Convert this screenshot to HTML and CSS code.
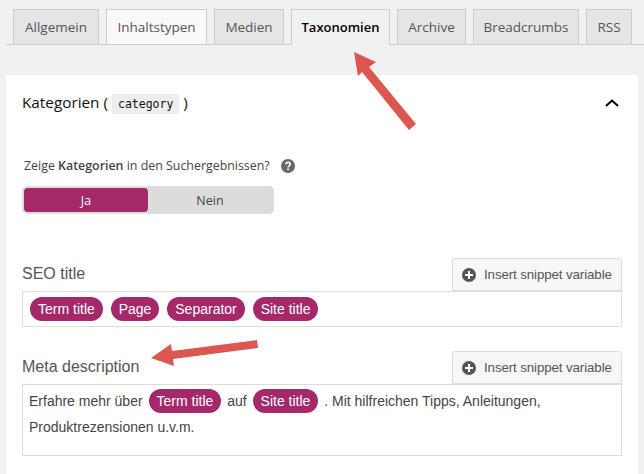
FILE: index.html
```html
<!DOCTYPE html>
<html lang="de">
<head>
<meta charset="utf-8">
<title>Taxonomien</title>
<link rel="stylesheet" href="styles.css">
</head>
<body>
<nav class="tabs">
  <a class="tab">Allgemein</a>
  <a class="tab tab-light">Inhaltstypen</a>
  <a class="tab">Medien</a>
  <a class="tab tab-active">Taxonomien</a>
  <a class="tab">Archive</a>
  <a class="tab">Breadcrumbs</a>
  <a class="tab">RSS</a>
</nav>
<main class="card">
  <header class="card-head">
    <h2 class="card-title">Kategorien ( <code class="code">category</code> )</h2>
    <svg class="chevron" width="14" height="10" viewBox="0 0 14 10"><path d="M1 8 7 2.500 13 8" fill="none" stroke="#000" stroke-width="2"/></svg>
  </header>
  <div class="question">
    <span>Zeige <b>Kategorien</b> in den Suchergebnissen?</span>
    <svg class="help" width="14" height="14" viewBox="0 0 14 14"><circle cx="7" cy="7" r="7" fill="#646970"/><path d="M4.900 5.400C5 4.100 5.900 3.400 7.100 3.400c1.300 0 2.100.8 2.100 1.800 0 1.700-2.100 1.600-2.100 3.300" fill="none" stroke="#fff" stroke-width="1.600"/><rect x="6.200" y="9.500" width="1.800" height="1.700" fill="#fff"/></svg>
  </div>
  <div class="toggle">
    <span class="toggle-opt toggle-on">Ja</span>
    <span class="toggle-opt">Nein</span>
  </div>
  <section class="field field-title">
    <div class="field-head">
      <label class="field-label">SEO title</label>
      <button class="snippet"><svg width="14" height="14" viewBox="0 0 14 14"><circle cx="7" cy="7" r="7" fill="#555"/><path d="M7 3v8M3 7h8" stroke="#fff" stroke-width="2"/></svg>Insert snippet variable</button>
    </div>
    <div class="editor editor-title"><span class="pill">Term title</span> <span class="pill">Page</span> <span class="pill">Separator</span> <span class="pill">Site title</span></div>
  </section>
  <section class="field field-meta">
    <div class="field-head">
      <label class="field-label">Meta description</label>
      <button class="snippet"><svg width="14" height="14" viewBox="0 0 14 14"><circle cx="7" cy="7" r="7" fill="#555"/><path d="M7 3v8M3 7h8" stroke="#fff" stroke-width="2"/></svg>Insert snippet variable</button>
    </div>
    <div class="editor editor-meta">Erfahre mehr über <span class="pill">Term title</span> auf <span class="pill">Site title</span> . Mit hilfreichen Tipps, Anleitungen, Produktrezensionen u.v.m.</div>
  </section>
</main>
<svg class="arrows" width="644" height="474" viewBox="0 0 644 474">
  <path d="M354 52 376 62 369 67 416 124 409 130 362 72 358 76Z" fill="#dc5750"/>
  <path d="M151 358 171 344 172 351 257 340 258 348 173 359 174 366Z" fill="#dc5750"/>
</svg>
</body>
</html>
```
FILE: styles.css
```css
* { box-sizing: border-box; }
html, body { height: 100%; }
body {
  margin: 0;
  background: #f1f1f1;
  font-family: "Liberation Sans", Arial, sans-serif;
  color: #444;
  overflow: hidden;
  position: relative;
}
.tabs {
  display: grid;
  grid-template-columns: 86px 101px 70px 99px 69px 106px 46px;
  gap: 7px;
  height: 45px;
  margin-left: 6px;
  padding: 9px 0 0 7px;
  border-bottom: 1px solid #ccc;
}
.tab {
  height: 35px;
  border: 1px solid #ccc;
  border-bottom: 0;
  background: #e5e5e5;
  color: #555;
  text-align: center;
  font: 500 13.500px/34px "Open Sans", sans-serif;
}
.tab-light { background: #f9f9f9; }
.tab-active {
  height: 36px;
  background: #f1f1f1;
  color: #000;
  font-size: 13px;
  font-weight: 600;
}
.card {
  margin: 30px 6px 0;
  height: 399px;
  padding: 0 16px;
  background: #fff;
}
.card-head {
  display: flex;
  justify-content: space-between;
  align-items: center;
  height: 56px;
}
.card-title {
  margin: 0;
  font: 500 15.300px/20px "Open Sans", sans-serif;
  color: #111;
}
.code {
  display: inline-block;
  padding: 0 6px;
  background: #eee;
  font: 400 11.500px/20px "DejaVu Sans Mono", monospace;
}
.chevron { margin-right: 3px; }
.question {
  display: flex;
  align-items: center;
  gap: 11px;
  margin-top: 26px;
  padding-left: 2px;
  height: 18px;
  font: 400 12.400px/18px "Open Sans", sans-serif;
  color: #444;
}
.question b { font-weight: 600; }
.toggle {
  display: flex;
  width: 252px;
  height: 28px;
  margin-top: 11px;
  padding: 2px;
  background: #dcdcdc;
  border-radius: 5px;
  font: 400 12.500px/25px "Open Sans", sans-serif;
}
.toggle-opt { flex: 1; text-align: center; }
.toggle-on {
  background: #a4286a;
  color: #fff;
  border-radius: 4px;
}
.field-head {
  display: flex;
  justify-content: space-between;
  align-items: flex-end;
  height: 33px;
}
.field-title { margin-top: 44px; }
.field-meta { margin-top: 24px; }
.field-label {
  font-size: 16px;
  line-height: 19px;
  margin-bottom: 8px;
  color: #555;
}
.snippet {
  display: flex;
  align-items: center;
  gap: 8px;
  width: 170px;
  height: 33px;
  padding: 0 0 0 9px;
  background: #f7f7f7;
  border: 1px solid #ddd;
  border-radius: 3px 3px 0 0;
  font: 400 13.300px "Liberation Sans", sans-serif;
  letter-spacing: -.1px;
  white-space: nowrap;
  color: #555;
}
.editor {
  border: 1px solid #ddd;
  padding: 0 6px;
  font-size: 14px;
  line-height: 26px;
  color: #444;
  background: #fff;
}
.editor-title { height: 36px; padding: 4px 7px 0; }
.editor-meta { height: 72px; padding-top: 3px; }
.pill {
  display: inline-block;
  height: 24px;
  margin: 0 2px;
  padding: 0 8px;
  border-radius: 12px;
  background: #a4286a;
  color: #fff;
  line-height: 24px;
}
.editor-title .pill:first-child { margin-left: 0; }
.arrows {
  position: absolute;
  left: 0;
  top: 0;
  pointer-events: none;
}
```
